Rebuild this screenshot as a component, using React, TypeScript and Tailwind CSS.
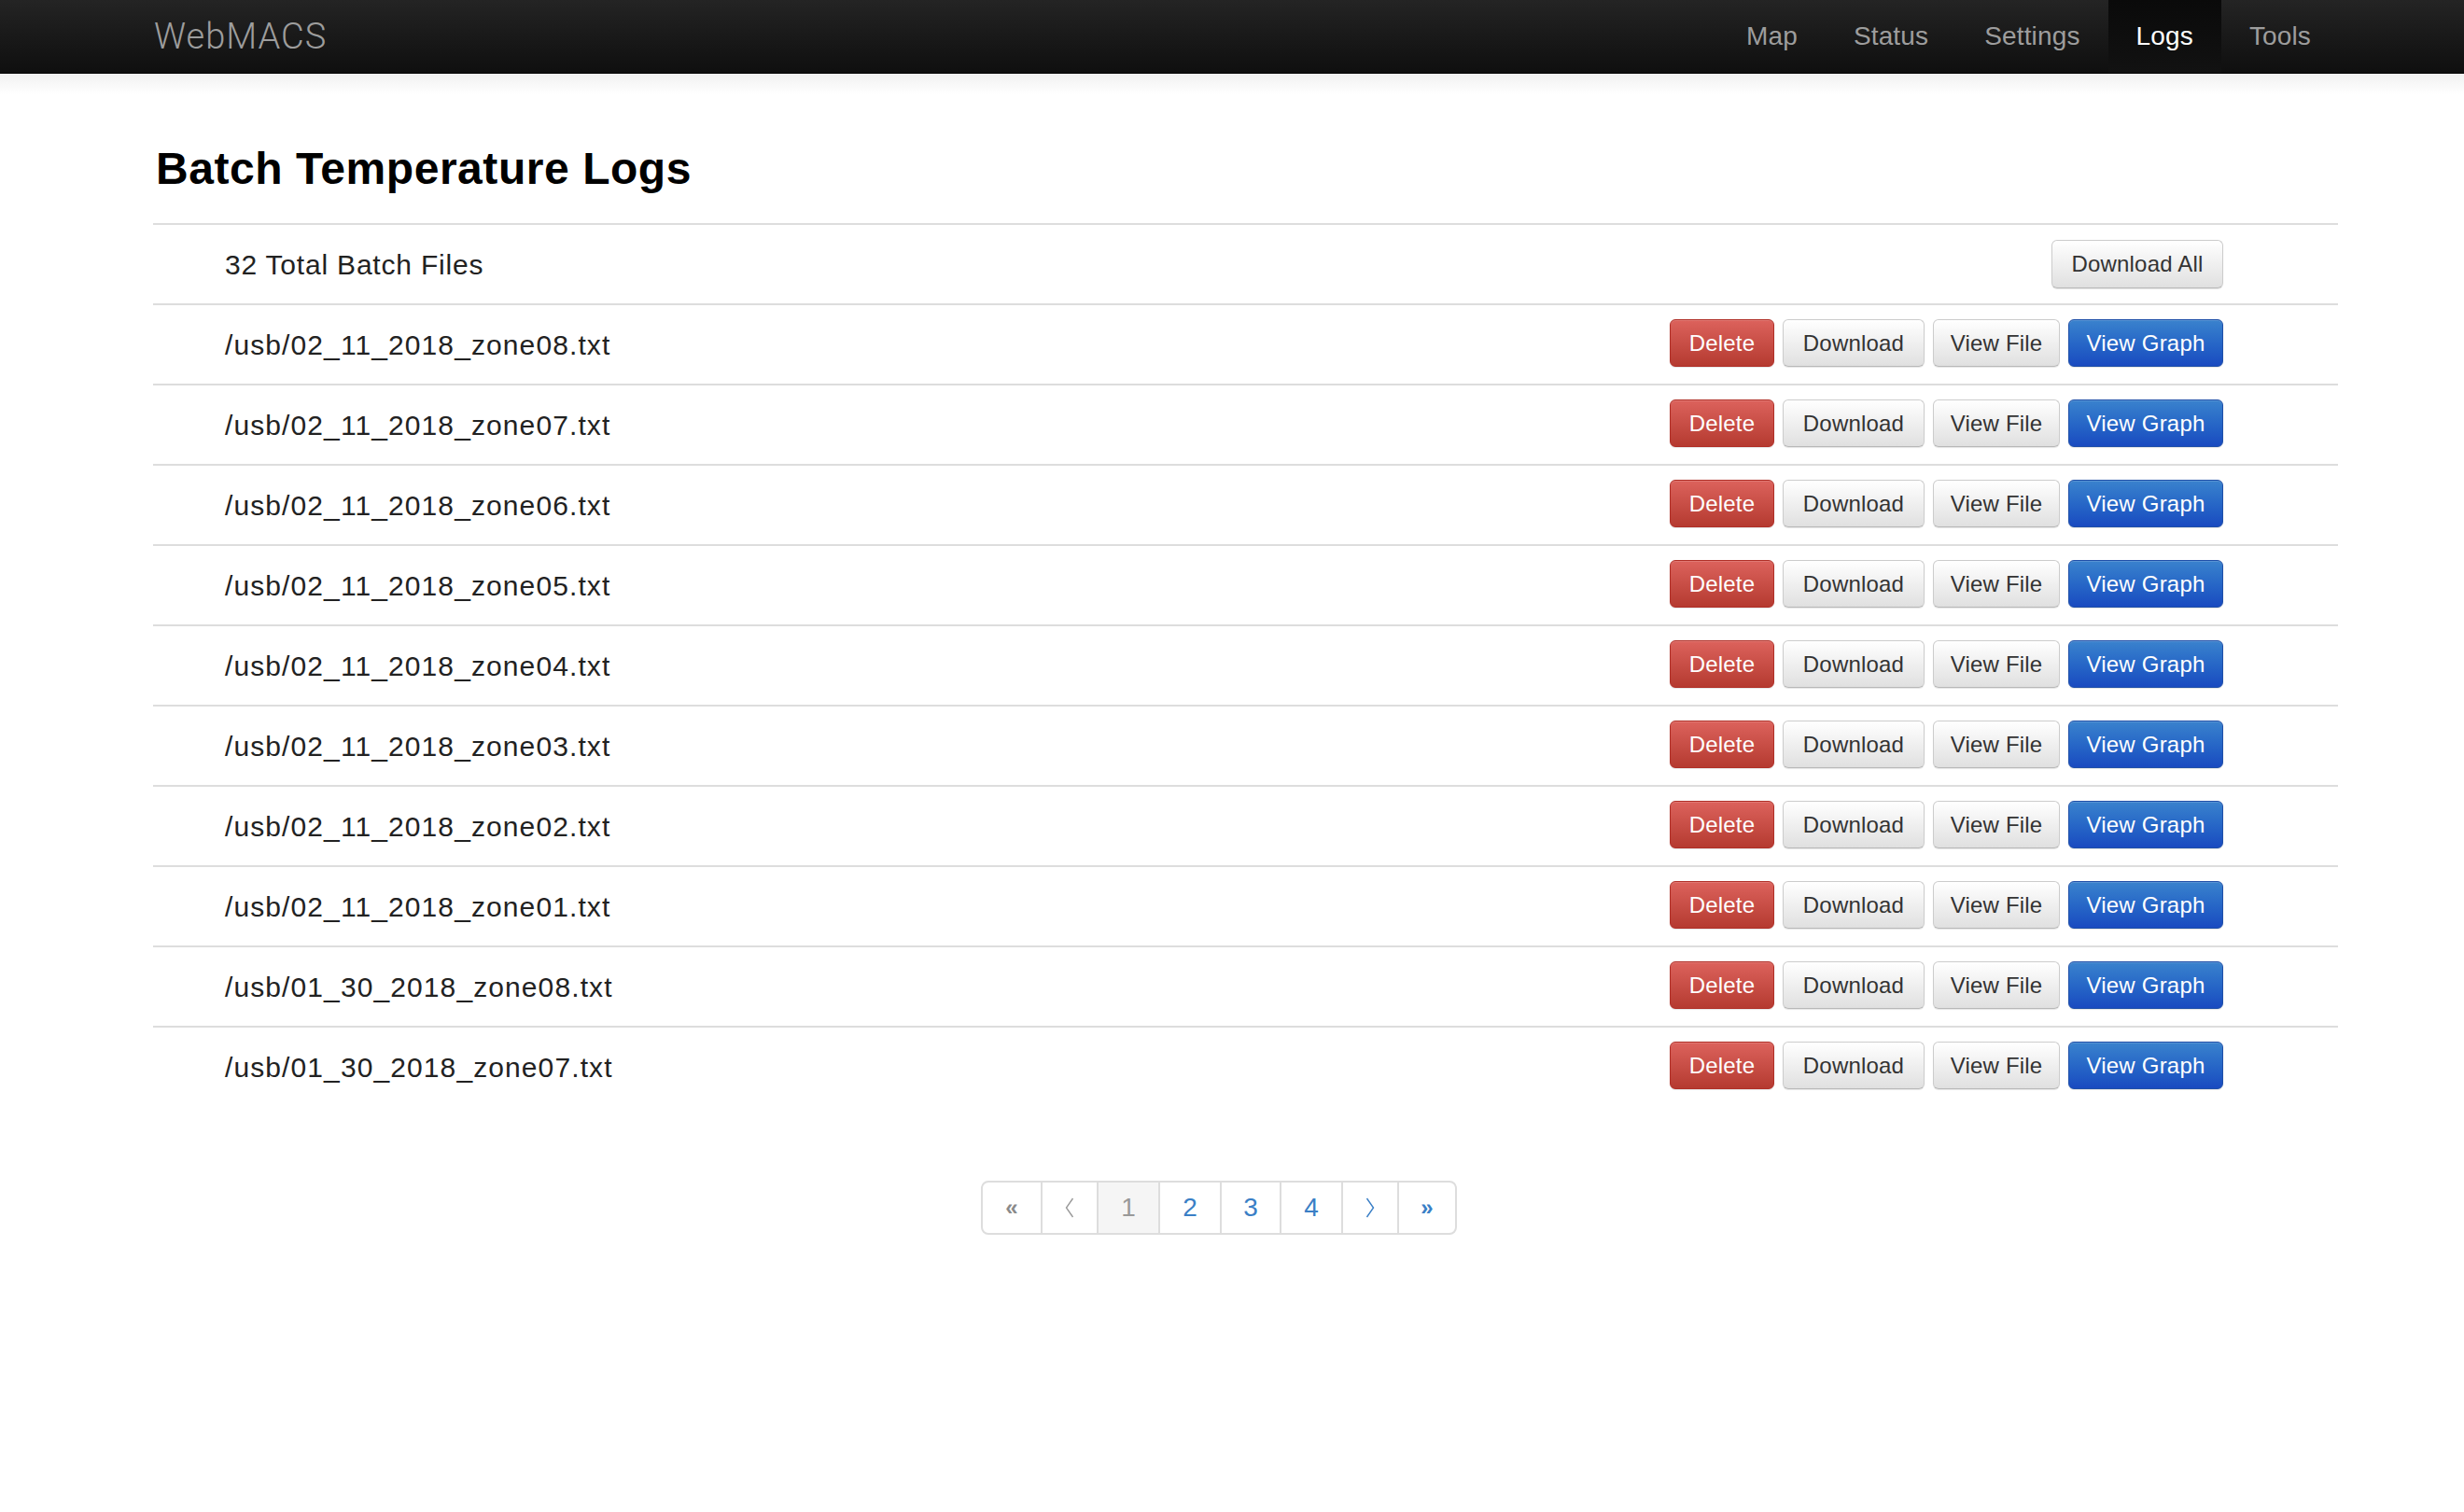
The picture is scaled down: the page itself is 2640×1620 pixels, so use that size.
import React from "react";

const files = [
  "/usb/02_11_2018_zone08.txt",
  "/usb/02_11_2018_zone07.txt",
  "/usb/02_11_2018_zone06.txt",
  "/usb/02_11_2018_zone05.txt",
  "/usb/02_11_2018_zone04.txt",
  "/usb/02_11_2018_zone03.txt",
  "/usb/02_11_2018_zone02.txt",
  "/usb/02_11_2018_zone01.txt",
  "/usb/01_30_2018_zone08.txt",
  "/usb/01_30_2018_zone07.txt",
];

const navItems = ["Map", "Status", "Settings", "Logs", "Tools"];

const btnBase =
  "h-[51px] flex items-center justify-center rounded-[6px] border text-[24px] leading-none tracking-[0.2px] shadow-[inset_0_1px_0_rgba(255,255,255,0.15),0_1px_1px_rgba(0,0,0,0.1)]";
const btnDefault =
  "bg-gradient-to-b from-[#ffffff] to-[#e0e0e0] border-[#cccccc] border-b-[#b8b8b8] text-[#333333]";

function Chevron({ dir, color }: { dir: "left" | "right"; color: string }) {
  return (
    <svg width="10" height="22" viewBox="0 0 10 22" fill="none">
      {dir === "left" ? (
        <polyline points="8.5,1 1.5,11 8.5,21" stroke={color} strokeWidth="1.4" strokeLinejoin="miter" />
      ) : (
        <polyline points="1.5,1 8.5,11 1.5,21" stroke={color} strokeWidth="1.4" strokeLinejoin="miter" />
      )}
    </svg>
  );
}

export default function App() {
  return (
    <div className="min-h-[1620px] bg-white font-['Liberation_Sans',Arial,sans-serif] text-[#333333]">
      {/* Navbar */}
      <div className="h-[79px] bg-gradient-to-b from-[#242424] to-[#0f0f0f] border-b border-[#070707]">
        <div className="ml-[165px] w-[2341px] h-[78px] flex items-center justify-between">
          <div className="font-['Roboto',sans-serif] font-light text-[38px] text-[#9d9d9d] tracking-[1px]">
            WebMACS
          </div>
          <div className="flex h-full">
            {navItems.map((n) => (
              <div
                key={n}
                className={
                  n === "Logs"
                    ? "h-full flex items-center px-[30px] text-[28px] tracking-[0.15px] text-white bg-gradient-to-b from-[#0a0a0a] to-[#121212]"
                    : "h-full flex items-center px-[30px] text-[28px] tracking-[0.15px] text-[#9d9d9d]"
                }
              >
                {n}
              </div>
            ))}
          </div>
        </div>
      </div>
      <div className="h-[22px] bg-gradient-to-b from-[#f1f1f1] to-white" />

      {/* Content */}
      <div className="ml-[164px] w-[2341px]">
        <h1 className="mt-[53px] h-[53px] leading-[53px] text-[48px] font-bold text-black pl-[3px] tracking-[0.55px]">
          Batch Temperature Logs
        </h1>
        <div className="mt-[32px]">
          <div className="border-t-2 border-[#dddddd] h-[86px] flex items-center justify-between pl-[77px] pr-[123px]">
            <div className="text-[30px] text-[#222222] tracking-[0.8px]">32 Total Batch Files</div>
            <button className={`${btnBase} ${btnDefault} w-[184px] h-[52px]`}>Download All</button>
          </div>
          {files.map((f) => (
            <div
              key={f}
              className="border-t-2 border-[#dddddd] h-[86px] flex items-center justify-between pl-[77px] pr-[123px]"
            >
              <div className="text-[30px] text-[#222222] tracking-[1.1px]">{f}</div>
              <div className="flex gap-[9px] mt-[-3px]">
                <button
                  className={`${btnBase} w-[112px] bg-gradient-to-b from-[#dc625c] to-[#b53a30] border-[#b02f27] text-white`}
                >
                  Delete
                </button>
                <button className={`${btnBase} ${btnDefault} w-[152px]`}>Download</button>
                <button className={`${btnBase} ${btnDefault} w-[136px]`}>View File</button>
                <button
                  className={`${btnBase} w-[166px] bg-gradient-to-b from-[#3a82cd] to-[#1a4ac0] border-[#1f4fa8] text-white`}
                >
                  View Graph
                </button>
              </div>
            </div>
          ))}
        </div>
      </div>

      {/* Pagination */}
      <div className="ml-[1051px] mt-[80px] w-[510px] h-[58px] flex border-2 border-[#dddddd] rounded-[8px] overflow-hidden text-[28px]">
        <div className="w-[62px] flex items-center justify-center text-[24px] font-bold text-[#8a8a8a]">«</div>
        <div className="w-[60px] border-l-2 border-[#dddddd] flex items-center justify-center">
          <Chevron dir="left" color="#9a9a9a" />
        </div>
        <div className="w-[66px] border-l-2 border-[#dddddd] flex items-center justify-center bg-[#f5f5f5] text-[#999999]">
          1
        </div>
        <div className="w-[66px] border-l-2 border-[#dddddd] flex items-center justify-center text-[#3a7fc6]">2</div>
        <div className="w-[64px] border-l-2 border-[#dddddd] flex items-center justify-center text-[#3a7fc6]">3</div>
        <div className="w-[66px] border-l-2 border-[#dddddd] flex items-center justify-center text-[#3a7fc6]">4</div>
        <div className="w-[60px] border-l-2 border-[#dddddd] flex items-center justify-center">
          <Chevron dir="right" color="#3a7fc6" />
        </div>
        <div className="flex-1 border-l-2 border-[#dddddd] flex items-center justify-center text-[24px] font-bold text-[#3a7fc6]">
          »
        </div>
      </div>
    </div>
  );
}
